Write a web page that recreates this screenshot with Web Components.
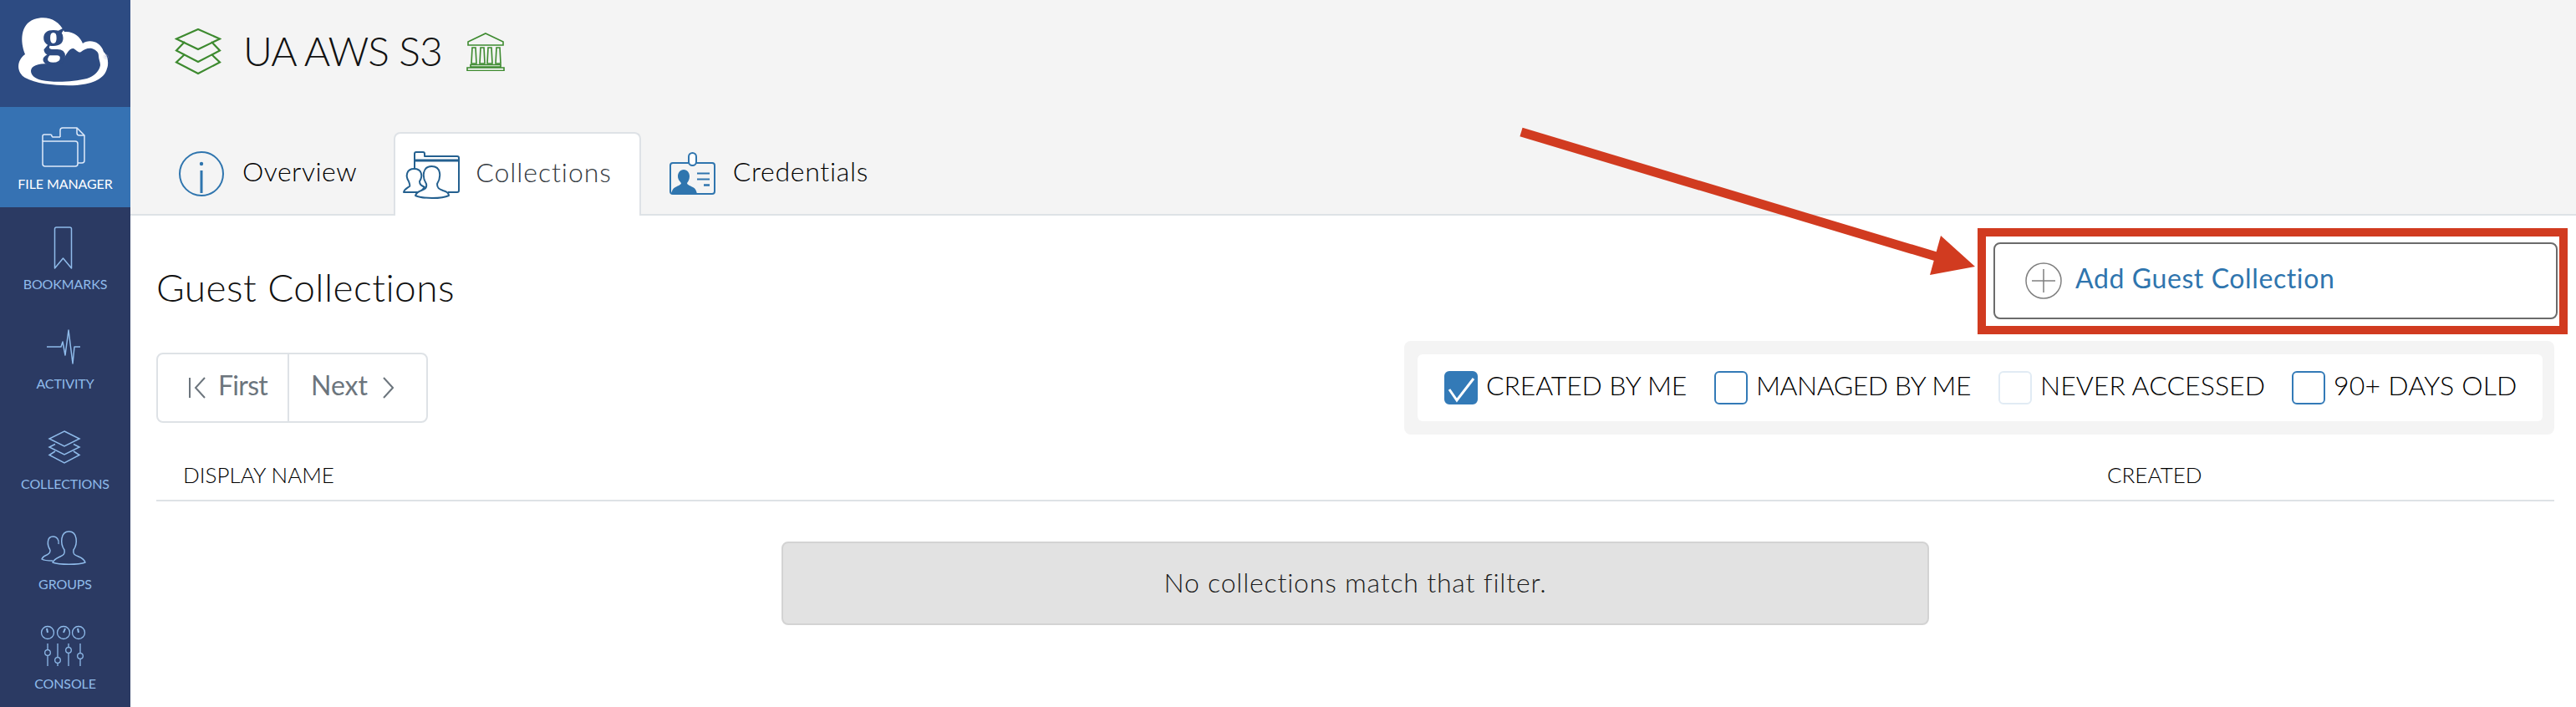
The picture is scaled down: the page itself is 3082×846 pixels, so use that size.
<!DOCTYPE html>
<html lang="en">
<head>
<meta charset="utf-8">
<title>UA AWS S3 - Guest Collections</title>
<style>
    html, body { margin: 0; height: 100%; overflow: hidden; background: #fff; }
    body { font-family: Lato, "Open Sans", sans-serif; color: #222; }
    svg { display: block; }
</style>
</head>
<body>
<gcs-shell>
    <gcs-sidebar slot="nav">
        <gcs-logo></gcs-logo>
        <gcs-nav-item label="FILE MANAGER" active>
            <svg width="78" height="60" viewBox="0 0 78 60" fill="none" stroke="currentColor" stroke-width="1.5">
                <path d="M33 16V8a3 3 0 0 1 3-3h17l9 9v30a3 3 0 0 1-3 3h-5"/>
                <path d="M53 5v6a3 3 0 0 0 3 3h6"/>
                <path d="M12 21v-6a2 2 0 0 1 2-2h7a2 2 0 0 1 2 2l1 1h9"/>
                <path d="M12 21h39a3 3 0 0 1 3 3v24a3 3 0 0 1-3 3H15a3 3 0 0 1-3-3z"/>
            </svg>
        </gcs-nav-item>
        <gcs-nav-item label="BOOKMARKS">
            <svg width="78" height="60" viewBox="0 0 78 60" fill="none" stroke="currentColor" stroke-width="1.5" stroke-linejoin="round">
                <path d="M26.500 6a2 2 0 0 1 2-2h16a2 2 0 0 1 2 2v47L36.500 41 26.500 53z"/>
            </svg>
        </gcs-nav-item>
        <gcs-nav-item label="ACTIVITY">
            <svg width="78" height="60" viewBox="0 0 78 60" fill="none" stroke="currentColor" stroke-width="1.500" stroke-linejoin="round">
                <path d="M17 28H34L36 22 39 38 43 8 48 48 50 28H57"/>
            </svg>
        </gcs-nav-item>
        <gcs-nav-item label="COLLECTIONS">
            <svg width="78" height="60" viewBox="0 0 78 60" fill="none" stroke="currentColor" stroke-width="1.500">
                <path d="M38 9 56 18 38 27 20 18z"/>
                <path d="M27 24.500 20 28 38 37 56 28 49 24.500"/>
                <path d="M27 33 20 37.500 38 47 56 37.500 49 33"/>
            </svg>
        </gcs-nav-item>
        <gcs-nav-item label="GROUPS">
            <svg width="78" height="60" viewBox="0 0 78 60" fill="none" stroke="currentColor" stroke-width="1.500" stroke-linejoin="round">
                <path d="M38 31C33 24 33 9 43.500 9 54 9 54 24 49 31 48 36 50 37 55 39 60 41 62 43 63 46 55 49 32 49 24 46 26 42 29 41 33 39 37 37 39 36 38 31Z"/>
                <path d="M21 31C17 25 17 15 24.500 15 29 15 32 19 31 24M21 31C21 35 20 35 17 37 14 38 12 40 11 42 14 44 18 44 24 44"/>
            </svg>
        </gcs-nav-item>
        <gcs-nav-item label="CONSOLE">
            <svg width="78" height="60" viewBox="0 0 78 60" fill="none" stroke="currentColor" stroke-width="1.300">
                <circle cx="18" cy="11" r="7.500"/><circle cx="37" cy="11" r="7.500"/><circle cx="55" cy="11" r="7.500"/>
                <path d="M18 11 17 6M37 11 39 6M55 11 54 6" stroke-width="2"/>
                <path d="M18 24V31.500M18 38.500V51M30 24V40.500M30 47.500V51M43 24V28.500M43 35.500V51M57 24V35.500M57 42.500V51"/>
                <circle cx="18" cy="35" r="3.300"/><circle cx="30" cy="44" r="3.300"/><circle cx="43" cy="32" r="3.300"/><circle cx="57" cy="39" r="3.300"/>
            </svg>
        </gcs-nav-item>
    </gcs-sidebar>

    <gcs-title-bar slot="head" name="UA AWS S3">
        <svg slot="lead" width="56" height="56" viewBox="0 0 56 56" fill="none" stroke="#3d8a2f" stroke-width="2.200">
            <path d="M28 1 54 12.500 28 25 2 12.500z"/>
            <path d="M12 17 2 27.500 28 41 54 27.500 44 17" transform="translate(0 -1)"/>
            <path d="M12 32 2 41.500 28 55 54 41.500 44 32" transform="translate(0 -1)"/>
        </svg>
        <svg slot="trail" width="46" height="46" viewBox="0 0 46 46" fill="none" stroke="#3d8a2f" stroke-width="1.600">
            <path d="M23 1 44 11V15H2V11z"/>
            <path d="M7 18h4l1 19H6zM17 18h4l1 19h-6zM26 18h4l1 19h-6zM36 18h4l1 19h-6z"/>
            <path d="M5 38.500H41V41H5zM1 42H45V45.500H1z"/>
        </svg>
    </gcs-title-bar>

    <gcs-tab-bar slot="head">
        <gcs-tab label="Overview" style="--pad-l:27px;--pad-r:44px;--gap:22px">
            <svg width="54" height="54" viewBox="0 0 54 54" fill="none" stroke="#2f75ae" stroke-width="2">
                <circle cx="27" cy="27" r="26"/>
                <path d="M27 23V50" stroke-width="3"/>
                <circle cx="27" cy="15" r="2.200" fill="#2f75ae" stroke="none"/>
            </svg>
        </gcs-tab>
        <gcs-tab label="Collections" active style="--pad-l:8px;--pad-r:33px;--gap:18px;--ls:.95px">
            <svg width="70" height="60" viewBox="0 0 70 60" fill="none" stroke="#24608f" stroke-width="2" stroke-linejoin="round">
                <path d="M15 34V5a2 2 0 0 1 2-2h8a2 2 0 0 1 2 2v3H66a2 2 0 0 1 2 2v39a2 2 0 0 1-2 2H55"/>
                <path d="M15 13H68" stroke-width="3"/>
                <path d="M8 38C4 32 5 23 14.500 23 24 23 25 32 21 38 21 42 23 43 27 45L22 51H2C3 47 6 46 9 44 10 43 9 41 8 38Z" fill="#fff"/>
                <path d="M29 41C24 33 24 20 35.500 20 47 20 47 33 42 41 42 46 44 47 49 49 53 50 56 52 56 55 48 59 24 59 16 55 17 52 20 50 23 49 28 47 30 46 29 41Z" fill="#fff"/>
            </svg>
        </gcs-tab>
        <gcs-tab label="Credentials" style="--pad-l:33px;--pad-r:30px;--gap:21px;--ls:.7px">
            <svg width="56" height="52" viewBox="0 0 56 52" fill="none" stroke="#2f75ae" stroke-width="2">
                <path d="M24 13H5a3 3 0 0 0-3 3v31a3 3 0 0 0 3 3h47a3 3 0 0 0 3-3V16a3 3 0 0 0-3-3H33"/>
                <rect x="24" y="1" width="9" height="15" rx="4.500" fill="#fff"/>
                <path d="M18 21c4.500 0 7 4 7 8 0 4-2 6.500-3 8 0 2 4 3.500 7 5 3 1.500 4 4 5 8H3c1-4 2-6.500 5-8 3-1.500 7-3 7-5-1-1.500-4-4-4-8 0-4 2.500-8 7-8z" fill="#2f75ae" stroke="none"/>
                <path d="M34 25.500H49M34 32.500H49" stroke-width="1.800"/>
                <path d="M42 39.500H49" stroke-width="2.500"/>
            </svg>
        </gcs-tab>
    </gcs-tab-bar>

    <gcs-panel-head heading="Guest Collections">
        <gcs-add-button label="Add Guest Collection"></gcs-add-button>
    </gcs-panel-head>

    <gcs-toolbar>
        <gcs-pager></gcs-pager>
        <gcs-filters>
            <gcs-filter label="CREATED BY ME" state="on" style="--w:240px;--ls:-.15px"></gcs-filter>
            <gcs-filter label="MANAGED BY ME" style="--w:256px;--ls:-.5px;--after:34px"></gcs-filter>
            <gcs-filter label="NEVER ACCESSED" state="dim" style="--w:267px;--ls:.05px;--after:34px"></gcs-filter>
            <gcs-filter label="90+ DAYS OLD" style="--w:219px;--ls:.2px"></gcs-filter>
        </gcs-filters>
    </gcs-toolbar>

    <gcs-table-head name="DISPLAY NAME" created="CREATED"></gcs-table-head>
    <gcs-notice>No collections match that filter.</gcs-notice>

    <gcs-callout slot="over"></gcs-callout>
</gcs-shell>

<script>
class GcsShell extends HTMLElement {
    constructor() {
        super();
        this.attachShadow({ mode: 'open' });
        this.shadowRoot.innerHTML = `
            <style>
                :host { display: flex; height: 846px; width: 3082px; }
                main { position: relative; flex: 1; display: flex; flex-direction: column; min-width: 0; }
                header { background: #f4f4f4; }
            </style>
            <slot name="nav"></slot>
            <main>
                <header><slot name="head"></slot></header>
                <slot></slot>
                <slot name="over"></slot>
            </main>
        `;
    }
}

class GcsSidebar extends HTMLElement {
    constructor() {
        super();
        this.attachShadow({ mode: 'open' });
        this.shadowRoot.innerHTML = `
            <style>
                :host { display: flex; flex-direction: column; width: 156px; flex: none; background: #2b3a63; overflow: hidden; }
            </style>
            <slot></slot>
        `;
    }
}

class GcsLogo extends HTMLElement {
    constructor() {
        super();
        this.attachShadow({ mode: 'open' });
        this.shadowRoot.innerHTML = `
            <style>
                :host { display: block; height: 128px; background: #2d4b82; }
                svg { display: block; }
                text { font-family: "Liberation Serif", serif; }
            </style>
            <svg width="156" height="128" viewBox="0 0 156 128">
                <path fill="#fff" d="M30 65C24 50 24 29 41 23 55 18 70 23 77 38 88 37 96 44 99 52 105 47 120 48 124 62 130 67 130 78 128 82 125 94 112 100 92 102 72 103 44 101 30 93 20 87 19 73 30 65Z"/>
                <path fill="#2d4b82" d="M37 85C37 79 45 76 58 76 67 77 73 75 77 69 80 63 84 57 88 58 92 60 94 64 97 62 101 59 105 57 110 58 115 60 118 62 118 67 118 71 120 74 120 78 119 85 113 91 104 94 88 98 64 99 50 96 42 94 37 90 37 85Z"/>
                <text transform="translate(50 65) scale(.92 1)" font-size="62" font-weight="700" fill="#2d4b82">g</text>
                <text x="123" y="71" font-size="9" fill="#b9c7e0">®</text>
            </svg>
        `;
    }
}

class GcsNavItem extends HTMLElement {
    constructor() {
        super();
        this.attachShadow({ mode: 'open' });
        this.shadowRoot.innerHTML = `
            <style>
                :host { display: flex; flex-direction: column; align-items: center; height: 120px; box-sizing: border-box; padding-top: 20px; color: #8fbbea; }
                :host([active]) { background: #3672b3; color: #dfeafa; }
                .label { margin-top: 2px; font-size: 16px; line-height: 20px; letter-spacing: -.1px; white-space: nowrap; }
                :host([active]) .label { color: #fff; }
            </style>
            <slot></slot>
            <div class="label">${this.getAttribute('label')}</div>
        `;
    }
}

class GcsTitleBar extends HTMLElement {
    constructor() {
        super();
        this.attachShadow({ mode: 'open' });
        this.shadowRoot.innerHTML = `
            <style>
                :host { display: flex; align-items: center; height: 158px; box-sizing: border-box; padding: 34px 0 68px 53px; }
                h1 { margin: -3px 29px 0 26px; font-size: 48px; font-weight: 300; line-height: 56px; letter-spacing: -.9px; color: #111; white-space: nowrap; }
            </style>
            <slot name="lead"></slot>
            <h1>${this.getAttribute('name')}</h1>
            <slot name="trail"></slot>
        `;
    }
}

class GcsTabBar extends HTMLElement {
    constructor() {
        super();
        this.attachShadow({ mode: 'open' });
        this.shadowRoot.innerHTML = `
            <style>
                :host { display: flex; height: 100px; box-sizing: border-box; padding-left: 31px; border-bottom: 2px solid #dee2e6; }
            </style>
            <slot></slot>
        `;
    }
}

class GcsTab extends HTMLElement {
    constructor() {
        super();
        this.attachShadow({ mode: 'open' });
        this.shadowRoot.innerHTML = `
            <style>
                :host { display: flex; align-items: center; box-sizing: border-box; height: 98px; padding: 0 var(--pad-r) 0 var(--pad-l); gap: var(--gap); border-top: 2px solid transparent; font-size: 32px; font-weight: 300; letter-spacing: var(--ls, .5px); color: #000; }
                :host([active]) { height: 100px; background: #fff; color: #33393f; border: 2px solid #dee2e6; border-bottom: 0; border-radius: 8px 8px 0 0; }
                span { white-space: nowrap; margin-bottom: 8px; }
            </style>
            <slot></slot>
            <span>${this.getAttribute('label')}</span>
        `;
    }
}

class GcsPanelHead extends HTMLElement {
    constructor() {
        super();
        this.attachShadow({ mode: 'open' });
        this.shadowRoot.innerHTML = `
            <style>
                :host { display: flex; justify-content: space-between; align-items: flex-start; padding: 32px 22px 0 31px; }
                h2 { margin: 28px 0 0; font-size: 46px; font-weight: 300; line-height: 52px; letter-spacing: .45px; color: #111; }
            </style>
            <h2>${this.getAttribute('heading')}</h2>
            <slot></slot>
        `;
    }
}

class GcsAddButton extends HTMLElement {
    constructor() {
        super();
        this.attachShadow({ mode: 'open' });
        this.shadowRoot.innerHTML = `
            <style>
                :host { display: flex; align-items: center; gap: 16px; width: 675px; height: 92px; box-sizing: border-box; padding-left: 36px; border: 2px solid #6b6b6b; border-radius: 8px; font-size: 32px; letter-spacing: .6px; color: #2f75ae; }
                svg { display: block; }
                span { margin-bottom: 8px; }
            </style>
            <svg width="44" height="44" viewBox="0 0 44 44" fill="none" stroke="#808080" stroke-width="1.500">
                <circle cx="22" cy="22" r="21"/>
                <path d="M22 8V36M8 22H36"/>
            </svg>
            <span>${this.getAttribute('label')}</span>
        `;
    }
}

class GcsToolbar extends HTMLElement {
    constructor() {
        super();
        this.attachShadow({ mode: 'open' });
        this.shadowRoot.innerHTML = `
            <style>
                :host { display: flex; justify-content: space-between; align-items: flex-start; margin-top: 26px; padding: 0 26px 0 31px; }
            </style>
            <slot></slot>
        `;
    }
}

class GcsPager extends HTMLElement {
    constructor() {
        super();
        this.attachShadow({ mode: 'open' });
        this.shadowRoot.innerHTML = `
            <style>
                :host { display: flex; margin-top: 14px; width: 325px; height: 84px; box-sizing: border-box; border: 2px solid #dee2e6; border-radius: 8px; font-size: 32px; color: #6c757d; }
                div { display: flex; align-items: center; box-sizing: border-box; height: 100%; }
                .first { width: 157px; padding-left: 37px; gap: 15px; border-right: 2px solid #dee2e6; }
                .first span { letter-spacing: -.7px; }
                .next { flex: 1; padding-left: 26px; gap: 18px; }
                span { margin-bottom: 8px; }
                svg { display: block; }
            </style>
            <div class="first">
                <svg width="20" height="26" viewBox="0 0 20 26" fill="none" stroke="#6c757d" stroke-width="2"><path d="M1 1V25M19 1 8 13 19 25"/></svg>
                <span>First</span>
            </div>
            <div class="next">
                <span>Next</span>
                <svg width="13" height="26" viewBox="0 0 13 26" fill="none" stroke="#6c757d" stroke-width="2"><path d="M1 1 12 13 1 25"/></svg>
            </div>
        `;
    }
}

class GcsFilters extends HTMLElement {
    constructor() {
        super();
        this.attachShadow({ mode: 'open' });
        this.shadowRoot.innerHTML = `
            <style>
                :host { display: block; width: 1376px; box-sizing: border-box; padding: 16px 14px 16px 16px; background: #f4f4f4; border-radius: 8px; }
                div { display: flex; align-items: center; height: 80px; box-sizing: border-box; padding-left: 32px; background: #fff; border-radius: 6px; }
            </style>
            <div><slot></slot></div>
        `;
    }
}

class GcsFilter extends HTMLElement {
    constructor() {
        super();
        this.attachShadow({ mode: 'open' });
        const state = this.getAttribute('state');
        const tick = state === 'on'
            ? `<svg width="40" height="40" viewBox="0 0 40 40" fill="none" stroke="#fff" stroke-width="3"><path d="M6 22 15 35 35 9"/></svg>`
            : '';
        this.shadowRoot.innerHTML = `
            <style>
                :host { display: flex; align-items: center; gap: 10px; margin-right: var(--after, 33px); font-size: 32px; font-weight: 300; color: #000; white-space: nowrap; }
                .box { width: 40px; height: 40px; box-sizing: border-box; border: 2px solid #337ab7; border-radius: 6px; flex: none; }
                .box svg { display: block; margin: -2px; }
                :host([state="on"]) .box { background: #337ab7; }
                :host([state="dim"]) .box { border-color: #e1ebf4; }
                span { width: var(--w); letter-spacing: var(--ls); margin-bottom: 8px; }
            </style>
            <div class="box">${tick}</div>
            <span>${this.getAttribute('label')}</span>
        `;
    }
}

class GcsTableHead extends HTMLElement {
    constructor() {
        super();
        this.attachShadow({ mode: 'open' });
        this.shadowRoot.innerHTML = `
            <style>
                :host { display: grid; grid-template-columns: 2334px 1fr; align-items: center; height: 80px; box-sizing: border-box; margin: 0 26px 0 31px; padding-top: 18px; border-bottom: 2px solid #dee2e6; font-size: 26px; font-weight: 300; color: #000; }
                .name { padding-left: 32px; }
            </style>
            <span class="name">${this.getAttribute('name')}</span>
            <span>${this.getAttribute('created')}</span>
        `;
    }
}

class GcsNotice extends HTMLElement {
    constructor() {
        super();
        this.attachShadow({ mode: 'open' });
        this.shadowRoot.innerHTML = `
            <style>
                :host { display: flex; align-items: center; justify-content: center; width: 1373px; height: 100px; box-sizing: border-box; margin: 48px 0 0 779px; padding-bottom: 4px; background: #e2e2e2; border: 2px solid #d3d3d3; border-radius: 8px; font-size: 32px; font-weight: 300; letter-spacing: .8px; color: #1c1c1c; }
            </style>
            <slot></slot>
        `;
    }
}

// arrow and red box were drawn on top of the screenshot, so they sit over the page
class GcsCallout extends HTMLElement {
    constructor() {
        super();
        this.attachShadow({ mode: 'open' });
        this.shadowRoot.innerHTML = `
            <style>
                :host { position: absolute; left: -156px; top: 0; width: 3082px; height: 846px; pointer-events: none; }
                .box { position: absolute; left: 2366px; top: 273px; width: 706px; height: 127px; box-sizing: border-box; border: 10px solid #d13b20; }
                svg { position: absolute; left: 0; top: 0; }
            </style>
            <svg width="3082" height="846" viewBox="0 0 3082 846">
                <path d="M1820 158 2320 308" stroke="#d13b20" stroke-width="11"/>
                <path d="M2322 282 2363 319 2309 329z" fill="#d13b20"/>
            </svg>
            <div class="box"></div>
        `;
    }
}

customElements.define('gcs-shell', GcsShell);
customElements.define('gcs-sidebar', GcsSidebar);
customElements.define('gcs-logo', GcsLogo);
customElements.define('gcs-nav-item', GcsNavItem);
customElements.define('gcs-title-bar', GcsTitleBar);
customElements.define('gcs-tab-bar', GcsTabBar);
customElements.define('gcs-tab', GcsTab);
customElements.define('gcs-panel-head', GcsPanelHead);
customElements.define('gcs-add-button', GcsAddButton);
customElements.define('gcs-toolbar', GcsToolbar);
customElements.define('gcs-pager', GcsPager);
customElements.define('gcs-filters', GcsFilters);
customElements.define('gcs-filter', GcsFilter);
customElements.define('gcs-table-head', GcsTableHead);
customElements.define('gcs-notice', GcsNotice);
customElements.define('gcs-callout', GcsCallout);
</script>
</body>
</html>
